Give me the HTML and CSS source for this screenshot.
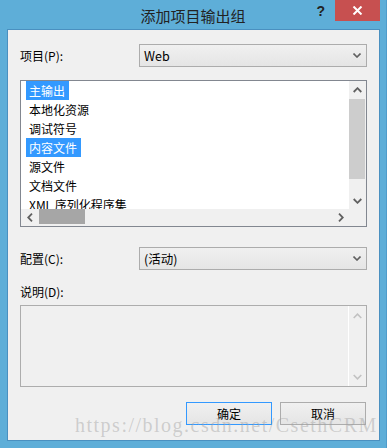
FILE: index.html
```html
<!DOCTYPE html>
<html lang="zh-CN">
  <head>
    <meta charset="UTF-8" />
    <title>添加项目输出组</title>
    <link rel="stylesheet" href="styles.css">
  </head>
  <body>
    <div class="window">
      <div class="titlebar">
        <div></div>
        <div class="title">添加项目输出组</div>
        <div class="controls">
          <span class="help">?</span>
          <span class="close">
            <svg width="11" height="9" viewBox="0 0 11 9"><path d="M1.5 0.5 L9.5 8.5 M9.5 0.5 L1.5 8.5" stroke="#fff" stroke-width="2" fill="none"/></svg>
          </span>
        </div>
      </div>
      <div class="client">
        <div class="row">
          <label>项目(P):</label>
          <div class="combo">
            <span>Web</span>
            <svg class="chev" width="8" height="5" viewBox="0 0 8 5"><path d="M0.5 0.5 L4 4 L7.5 0.5" stroke="#606060" stroke-width="1.6" fill="none"/></svg>
          </div>
        </div>

        <div class="listbox">
          <div class="list-main">
            <div class="items">
              <div class="item"><span class="sel">主输出</span></div>
              <div class="item"><span>本地化资源</span></div>
              <div class="item"><span>调试符号</span></div>
              <div class="item"><span class="sel">内容文件</span></div>
              <div class="item"><span>源文件</span></div>
              <div class="item"><span>文档文件</span></div>
              <div class="item"><span>XML 序列化程序集</span></div>
            </div>
            <div class="vscroll">
              <div class="arrow">
                <svg width="9" height="6" viewBox="0 0 9 6"><path d="M0.7 5 L4.5 1.2 L8.3 5" stroke="#606060" stroke-width="1.8" fill="none"/></svg>
              </div>
              <div class="vtrack"><div class="vthumb"></div></div>
              <div class="arrow">
                <svg width="9" height="6" viewBox="0 0 9 6"><path d="M0.7 1 L4.5 4.8 L8.3 1" stroke="#606060" stroke-width="1.8" fill="none"/></svg>
              </div>
            </div>
          </div>
          <div class="hscroll-row">
            <div class="hscroll">
              <div class="harrow">
                <svg width="6" height="9" viewBox="0 0 6 9"><path d="M5 0.7 L1.2 4.5 L5 8.3" stroke="#606060" stroke-width="1.8" fill="none"/></svg>
              </div>
              <div class="htrack"><div class="hthumb"></div></div>
              <div class="harrow">
                <svg width="6" height="9" viewBox="0 0 6 9"><path d="M1 0.7 L4.8 4.5 L1 8.3" stroke="#606060" stroke-width="1.8" fill="none"/></svg>
              </div>
            </div>
            <div class="corner"></div>
          </div>
        </div>

        <div class="row row-config">
          <label>配置(C):</label>
          <div class="combo">
            <span>(活动)</span>
            <svg class="chev" width="8" height="5" viewBox="0 0 8 5"><path d="M0.5 0.5 L4 4 L7.5 0.5" stroke="#606060" stroke-width="1.6" fill="none"/></svg>
          </div>
        </div>

        <div class="desc-label">说明(D):</div>
        <div class="desc">
          <div class="desc-body"></div>
          <div class="desc-scroll">
            <svg width="9" height="6" viewBox="0 0 9 6"><path d="M0.7 5 L4.5 1.2 L8.3 5" stroke="#c2c2c2" stroke-width="1.6" fill="none"/></svg>
            <svg width="9" height="6" viewBox="0 0 9 6"><path d="M0.7 1 L4.5 4.8 L8.3 1" stroke="#c2c2c2" stroke-width="1.6" fill="none"/></svg>
          </div>
        </div>

        <div class="buttons">
          <button class="btn default">确定</button>
          <button class="btn">取消</button>
        </div>
      </div>
      <div class="watermark">https://blog.csdn.net/CsethCRM</div>
    </div>
  </body>
</html>
```

FILE: styles.css
```css
body {
  margin: 0;
  font-family: "Noto Sans CJK SC", "Liberation Sans", sans-serif;
  font-size: 12px;
  color: #000;
}
.window {
  position: relative;
  width: 387px;
  height: 448px;
  background: #5eaed8;
  box-sizing: border-box;
  border-right: 1px solid #4f9ccb;
  overflow: hidden;
}
.titlebar {
  height: 29px;
  display: grid;
  grid-template-columns: 1fr auto 1fr;
}
.title {
  font-size: 15px;
  line-height: 29px;
  color: #222;
  padding-top: 1px;
}
.controls {
  display: flex;
  justify-content: flex-end;
  align-items: flex-start;
  padding-right: 6px;
}
.help {
  font-family: "Liberation Sans", sans-serif;
  font-weight: bold;
  font-size: 14px;
  color: #222;
  line-height: 22px;
  margin-right: 10px;
}
.close {
  width: 45px;
  height: 21px;
  background: #c75050;
  display: flex;
  align-items: center;
  justify-content: center;
}
.client {
  margin: 0 6px 7px 7px;
  height: 412px;
  box-sizing: border-box;
  border: 1px solid #4a90c0;
  background: #f0f0f0;
  padding: 14px 12px 0 12px;
}
.row {
  display: flex;
  align-items: center;
  height: 23px;
}
.row label {
  width: 119px;
  flex: none;
}
.combo {
  flex: 1;
  height: 23px;
  box-sizing: border-box;
  border: 1px solid #acacac;
  background: linear-gradient(#f0f0f0, #e5e5e5);
  display: flex;
  align-items: center;
  justify-content: space-between;
  padding: 0 5px 0 4px;
  font-size: 12.5px;
}
.listbox {
  margin-top: 13px;
  height: 147px;
  box-sizing: border-box;
  border: 1px solid #828790;
  background: #fff;
  display: flex;
  flex-direction: column;
}
.list-main {
  flex: 1;
  display: flex;
  overflow: hidden;
}
.items {
  flex: 1;
  overflow: hidden;
}
.item {
  height: 19px;
  line-height: 19px;
  white-space: nowrap;
}
.item span {
  display: inline-block;
  margin-left: 5px;
  padding: 0 4px 0 3px;
}
.item .sel {
  background: #3399ff;
  color: #fff;
}
.vscroll {
  width: 17px;
  background: #f0f0f0;
  display: flex;
  flex-direction: column;
}
.arrow {
  height: 17px;
  display: flex;
  align-items: center;
  justify-content: center;
}
.vtrack {
  flex: 1;
  padding: 1px 1px 0 0;
}
.vthumb {
  height: 80px;
  background: #cdcdcd;
}
.hscroll-row {
  height: 17px;
  display: flex;
  background: #f0f0f0;
}
.hscroll {
  flex: 1;
  display: flex;
}
.harrow {
  width: 17px;
  display: flex;
  align-items: center;
  justify-content: center;
}
.htrack {
  flex: 1;
  padding: 0 0 2px 1px;
}
.hthumb {
  width: 46px;
  height: 100%;
  background: #a6a6a6;
}
.corner {
  width: 17px;
}
.row-config {
  margin-top: 20px;
}
.desc-label {
  margin-top: 14px;
  line-height: 16px;
}
.desc {
  margin-top: 5px;
  height: 82px;
  box-sizing: border-box;
  border: 1px solid #adadad;
  display: flex;
}
.desc-body {
  flex: 1;
  border-right: 1px solid #fff;
}
.desc-scroll {
  width: 17px;
  display: flex;
  flex-direction: column;
  justify-content: space-between;
  align-items: center;
  padding: 7px 0 6px;
}
.buttons {
  margin-top: 15px;
  display: flex;
  justify-content: flex-end;
  gap: 8px;
  padding-right: 1px;
}
.btn {
  width: 86px;
  height: 23px;
  box-sizing: border-box;
  border: 1px solid #acacac;
  background: linear-gradient(#f0f0f0, #e5e5e5);
  font-family: "Noto Sans CJK SC", sans-serif;
  font-size: 12px;
  color: #000;
  padding: 0;
}
.btn.default {
  border-color: #3399ff;
}
.watermark {
  position: absolute;
  left: 75px;
  top: 414px;
  font-family: "Liberation Serif", serif;
  font-size: 20px;
  letter-spacing: 1.5px;
  color: rgba(160, 160, 160, 0.45);
  white-space: nowrap;
}
```
